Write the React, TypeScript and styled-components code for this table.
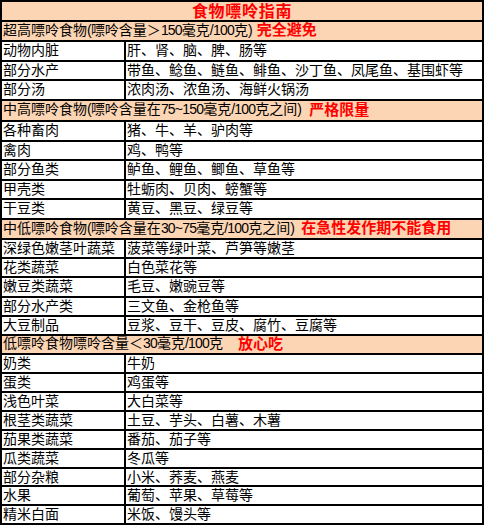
import React from "react";
import styled, { createGlobalStyle } from "styled-components";

const GlobalStyle = createGlobalStyle`
  html, body {
    margin: 0;
    padding: 0;
    background: #ffffff;
  }
  body {
    font-family: "Noto Sans CJK SC", "Noto Sans", sans-serif;
    color: #000000;
  }
`;

const Sheet = styled.div`
  width: 484px;
  box-sizing: border-box;
  border: 2px solid #000000;
  display: flex;
  flex-direction: column;
`;

const Band = styled.div<{ $h: number }>`
  height: ${(p) => p.$h}px;
  box-sizing: border-box;
  border-bottom: 2px solid #000000;
  background: #fcd5b4;
  display: flex;
  align-items: center;
  padding: 0 0 4px 1px;
  font-size: 14px;
  line-height: 14px;
  white-space: nowrap;
`;

const TitleBand = styled(Band)`
  justify-content: center;
  padding: 0 0 2px 0;
  color: #ff0000;
  font-weight: 700;
  font-size: 16px;
  line-height: 16px;
  letter-spacing: 0.7px;
`;

const Note = styled.span<{ $gap: number }>`
  color: #ff0000;
  font-weight: 700;
  font-size: 15px;
  margin-left: ${(p) => p.$gap}px;
`;

const Latin = styled.span`
  font-family: "Liberation Sans", "Noto Sans CJK SC", sans-serif;
  letter-spacing: -0.8px;
`;

const Row = styled.div<{ $h: number; $last?: boolean }>`
  height: ${(p) => p.$h}px;
  box-sizing: border-box;
  border-bottom: ${(p) => (p.$last ? "none" : "2px solid #000000")};
  background: #ffffff;
  display: grid;
  grid-template-columns: 124px 1fr;
`;

const Cell = styled.div<{ $first?: boolean }>`
  display: flex;
  align-items: center;
  padding: 0 0 4px 1px;
  box-sizing: border-box;
  border-right: ${(p) => (p.$first ? "2px solid #000000" : "none")};
  font-size: 14px;
  line-height: 14px;
  white-space: nowrap;
`;

type Section = {
  head: string;
  note: string;
  gap: number;
  rows: [string, string][];
};

const sections: Section[] = [
  {
    head: "超高嘌呤食物(嘌呤含量＞150毫克/100克)",
    note: "完全避免",
    gap: 5,
    rows: [
      ["动物内脏", "肝、肾、脑、脾、肠等"],
      ["部分水产", "带鱼、鲶鱼、鲢鱼、鲱鱼、沙丁鱼、凤尾鱼、基围虾等"],
      ["部分汤", "浓肉汤、浓鱼汤、海鲜火锅汤"],
    ],
  },
  {
    head: "中高嘌呤食物(嘌呤含量在75~150毫克/100克之间)",
    note: "严格限量",
    gap: 8,
    rows: [
      ["各种畜肉", "猪、牛、羊、驴肉等"],
      ["禽肉", "鸡、鸭等"],
      ["部分鱼类", "鲈鱼、鲤鱼、鲫鱼、草鱼等"],
      ["甲壳类", "牡蛎肉、贝肉、螃蟹等"],
      ["干豆类", "黄豆、黑豆、绿豆等"],
    ],
  },
  {
    head: "中低嘌呤食物(嘌呤含量在30~75毫克/100克之间)",
    note: "在急性发作期不能食用",
    gap: 7,
    rows: [
      ["深绿色嫩茎叶蔬菜", "菠菜等绿叶菜、芦笋等嫩茎"],
      ["花类蔬菜", "白色菜花等"],
      ["嫩豆类蔬菜", "毛豆、嫩豌豆等"],
      ["部分水产类", "三文鱼、金枪鱼等"],
      ["大豆制品", "豆浆、豆干、豆皮、腐竹、豆腐等"],
    ],
  },
  {
    head: "低嘌呤食物嘌呤含量＜30毫克/100克",
    note: "放心吃",
    gap: 15,
    rows: [
      ["奶类", "牛奶"],
      ["蛋类", "鸡蛋等"],
      ["浅色叶菜", "大白菜等"],
      ["根茎类蔬菜", "土豆、芋头、白薯、木薯"],
      ["茄果类蔬菜", "番茄、茄子等"],
      ["瓜类蔬菜", "冬瓜等"],
      ["部分杂粮", "小米、荞麦、燕麦"],
      ["水果", "葡萄、苹果、草莓等"],
      ["精米白面", "米饭、馒头等"],
    ],
  },
];

// Row heights (including the 2px rule below each row), top to bottom.
const heights = [
  20, 20, 20, 19, 20, 21, 20, 19, 20, 19, 20, 20, 19, 19, 20, 19, 19, 19, 19,
  19, 19, 19, 19, 19, 18, 19, 17,
];

// Split a header into CJK runs and half-width runs, so that digits and
// punctuation can be set narrower, as in the original sheet.
function Mixed({ text }: { text: string }) {
  const parts = text.match(/[\x20-\x7e]+|[^\x20-\x7e]+/g) ?? [];
  return (
    <span>
      {parts.map((p, i) =>
        /^[\x20-\x7e]+$/.test(p) ? <Latin key={i}>{p}</Latin> : <span key={i}>{p}</span>
      )}
    </span>
  );
}

export default function App() {
  let idx = 0;
  const total = heights.length;
  const next = () => heights[idx++] ?? 19;

  const titleH = next();
  const body: React.ReactNode[] = [];
  sections.forEach((s, si) => {
    body.push(
      <Band key={`h${si}`} $h={next()}>
        <Mixed text={s.head} />
        <Note $gap={s.gap}>{s.note}</Note>
      </Band>
    );
    s.rows.forEach(([a, b], ri) => {
      const h = next();
      const last = idx === total;
      body.push(
        <Row key={`r${si}-${ri}`} $h={h} $last={last}>
          <Cell $first>{a}</Cell>
          <Cell>{b}</Cell>
        </Row>
      );
    });
  });

  return (
    <>
      <GlobalStyle />
      <Sheet>
        <TitleBand $h={titleH}>食物嘌呤指南</TitleBand>
        {body}
      </Sheet>
    </>
  );
}
